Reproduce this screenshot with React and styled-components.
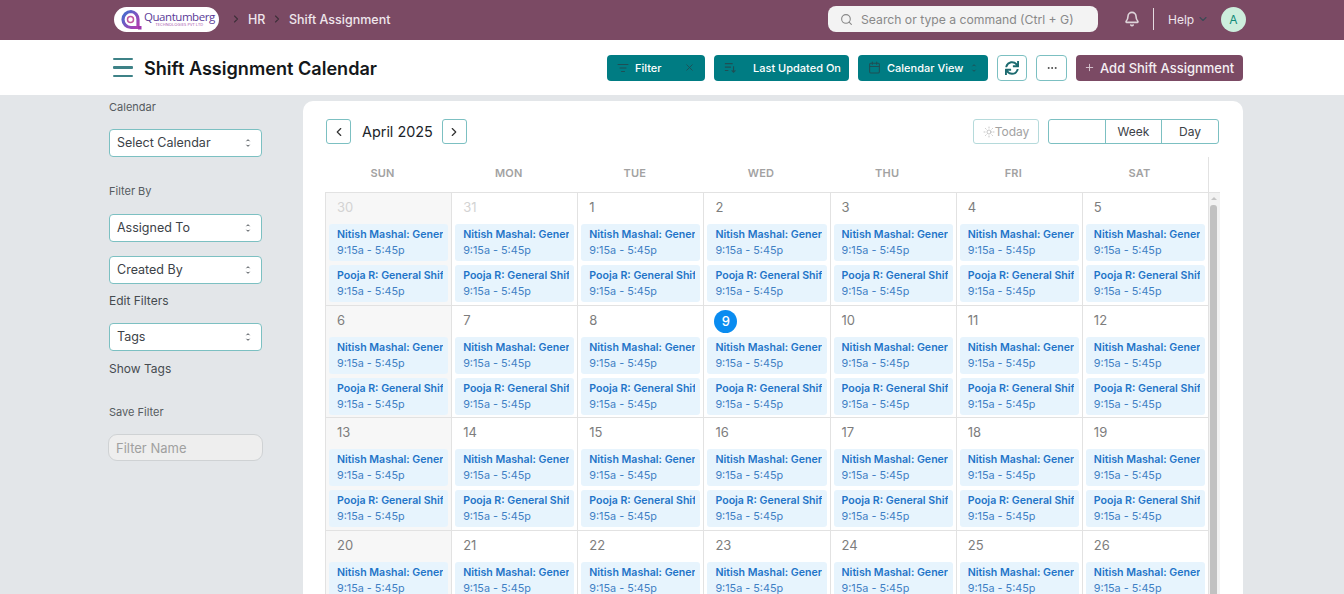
import React from 'react';
import styled, { createGlobalStyle } from 'styled-components';
import {
  Search, Bell, ChevronRight, ChevronLeft, ChevronDown, ListFilter, X, Calendar, Ellipsis, Plus, Sun,
} from 'lucide-react';
import { FaSync } from 'react-icons/fa';

const GlobalStyle = createGlobalStyle`
  html, body {
    margin: 0;
    padding: 0;
    height: 100%;
    overflow: hidden;
    background: #e3e6e9;
    font-family: Inter, "Liberation Sans", sans-serif;
  }
  * { box-sizing: border-box; }
`;

const Page = styled.div`
  height: 594px;
  overflow: hidden;
`;

const Navbar = styled.header`
  height: 40px;
  background: #7b4a64;
  display: flex;
  align-items: center;
  padding: 0 98px 2px 114px;
  color: #efe6ec;
  font-size: 13px;
`;

const LogoPill = styled.div`
  width: 105px;
  height: 25px;
  background: #fff;
  border-radius: 13px;
  display: flex;
  align-items: center;
  padding-left: 6px;
  gap: 1px;
  flex: none;
`;

const LogoText = styled.div`
  display: flex;
  flex-direction: column;
  align-items: center;
  color: #5b3c97;
  font-size: 11.5px;
  letter-spacing: -0.45px;
  line-height: 12px;
  font-family: "Open Sans", sans-serif;
`;

const LogoSub = styled.span`
  font-size: 4px;
  line-height: 4px;
  letter-spacing: 0.1px;
  color: #a04aa8;
`;

const Crumbs = styled.nav`
  display: flex;
  align-items: center;
  margin-left: 11px;
  font-size: 12.5px;
  font-weight: 500;
  flex: 1;
  svg { color: #3e2f39; }
`;

const Crumb = styled.span`
  margin: 0 5.5px 0 6px;
`;

const SearchBox = styled.div`
  width: 270px;
  height: 26px;
  background: #f3f3f3;
  border-radius: 8px;
  display: flex;
  align-items: center;
  gap: 8px;
  padding-left: 12px;
  color: #888;
  font-size: 12.2px;
  margin-right: 26px;
`;

const BellWrap = styled.div`
  display: flex;
  color: #ddd3d9;
  margin-right: 13px;
`;

const Divider = styled.div`
  width: 1px;
  height: 22px;
  background: #e4dbe0;
  margin-right: 14px;
`;

const HelpLabel = styled.span`
  font-size: 12px;
  width: 25px;
  margin-right: 4px;
`;

const HelpChevron = styled.div`
  display: flex;
  color: #3a4a55;
  margin-right: 12px;
`;

const Avatar = styled.div`
  width: 25px;
  height: 25px;
  border-radius: 50%;
  background: #cdeedd;
  color: #128a78;
  font-size: 12px;
  display: flex;
  align-items: center;
  justify-content: center;
  flex: none;
`;

const PageHead = styled.div`
  height: 55px;
  background: #fff;
  display: flex;
  align-items: center;
  padding: 0 101px 0 113px;
`;

const Burger = styled.div`
  width: 20px;
  display: flex;
  flex-direction: column;
  gap: 6px;
  margin-right: 11px;
`;

const BurgerLine = styled.span`
  height: 2.5px;
  background: #3e8287;
  border-radius: 1px;
`;

const Title = styled.h1`
  margin: 0;
  font-size: 18.1px;
  font-weight: 600;
  color: #14171a;
  flex: 1;
`;

const Actions = styled.div`
  display: flex;
  gap: 9px;
`;

const TealButton = styled.button`
  width: ${({ $w }) => $w}px;
  height: 26px;
  border: 0;
  border-radius: 4px;
  background: #007c83;
  color: #fff;
  font: 500 11px Inter, sans-serif;
  display: flex;
  align-items: center;
  padding: 0 10px;
  white-space: nowrap;
  svg { color: #1f4f55; flex: none; }
`;

const BtnText = styled.span`
  margin-left: ${({ $ml }) => $ml}px;
  flex: ${({ $grow }) => ($grow ? 1 : 'none')};
  text-align: left;
`;

const OutlineButton = styled.button`
  width: ${({ $w }) => $w}px;
  height: 26px;
  border: 1px solid #7cc0c2;
  border-radius: 4px;
  background: #fff;
  color: #1d6b70;
  display: flex;
  align-items: center;
  justify-content: center;
  padding: 0;
`;

const AddButton = styled.button`
  width: 167px;
  height: 26px;
  border: 0;
  border-radius: 4px;
  background: #7b4a64;
  color: #f5eff3;
  font: 500 13px Inter, sans-serif;
  display: flex;
  align-items: center;
  gap: 5px;
  padding: 0 0 0 8px;
  white-space: nowrap;
  svg { color: #d9c8d2; }
`;

const Content = styled.main`
  display: flex;
  padding: 5px 0 0 108px;
  gap: 40px;
`;

const Sidebar = styled.aside`
  width: 155px;
  display: flex;
  flex-direction: column;
  flex: none;
`;

const FieldLabel = styled.div`
  font-size: 11px;
  line-height: 14px;
  color: #555b60;
  margin-top: ${({ $mt }) => $mt || 0}px;
  margin-left: 1px;
`;

const LinkLabel = styled.div`
  font-size: 12px;
  line-height: 14px;
  color: #454b50;
  margin-top: ${({ $mt }) => $mt || 0}px;
  margin-left: 1px;
`;

const SelectBox = styled.div`
  width: 153px;
  height: 28px;
  margin: ${({ $mt }) => $mt || 0}px 0 0 1px;
  background: #fff;
  border: 1px solid #7cc0c2;
  border-radius: 4px;
  display: flex;
  align-items: center;
  justify-content: space-between;
  padding: 0 9px 1px 7px;
  font-size: 12.5px;
  color: #3c4248;
`;

const FilterInput = styled.div`
  width: 155px;
  height: 27px;
  margin-top: 15px;
  background: #eee;
  border: 1px solid #cfd2d4;
  border-radius: 9px;
  display: flex;
  align-items: center;
  padding-left: 7px;
  font-size: 13px;
  color: #a0a0a0;
`;

const Card = styled.section`
  width: 940px;
  height: 600px;
  margin-top: 1px;
  background: #fff;
  border-radius: 10px 10px 0 0;
  padding: 18px 23px 0 22px;
  flex: none;
`;

const Toolbar = styled.div`
  height: 25px;
  display: flex;
  align-items: center;
  margin: 0 1px 0 1px;
`;

const NavSquare = styled.button`
  width: 25px;
  height: 25px;
  border: 1px solid #7cc0c2;
  border-radius: 3px;
  background: #fff;
  color: #333;
  display: flex;
  align-items: center;
  justify-content: center;
  padding: 0;
`;

const MonthLabel = styled.div`
  font-size: 14.4px;
  color: #20242a;
  margin: 0 9px 0 11px;
`;

const TodayButton = styled.button`
  width: 66px;
  height: 25px;
  margin-left: auto;
  margin-right: 9px;
  border: 1px solid #b5dadb;
  border-radius: 3px;
  background: #fff;
  color: #a2a2a2;
  font: 400 12px Inter, sans-serif;
  display: flex;
  align-items: center;
  justify-content: center;
  padding: 0;
`;

const ViewGroup = styled.div`
  width: 171px;
  height: 25px;
  border: 1px solid #7cc0c2;
  border-radius: 3px;
  display: grid;
  grid-template-columns: 56px 56px 1fr;
`;

const ViewOption = styled.div`
  font-size: 12px;
  color: #3c4248;
  display: flex;
  align-items: center;
  justify-content: center;
  border-left: ${({ $first }) => ($first ? '0' : '1px solid #7cc0c2')};
`;

const DayHeader = styled.div`
  width: 884px;
  height: 35px;
  margin-top: 13px;
  border-right: 1px solid #e2e2e2;
  display: grid;
  grid-template-columns: repeat(7, 1fr);
`;

const DayName = styled.div`
  font-size: 11px;
  font-weight: 600;
  color: #a2a2a2;
  letter-spacing: 0.2px;
  display: flex;
  align-items: center;
  justify-content: center;
  padding: 0 11px 3px 0;
`;

const CalendarBody = styled.div`
  width: 895px;
  height: 470px;
  display: flex;
  border-top: 1px solid #e2e2e2;
`;

const Scroller = styled.div`
  width: 884px;
  flex: none;
  overflow: hidden;
  border-left: 1px solid #e2e2e2;
`;

const ScrollRail = styled.div`
  width: 11px;
  flex: none;
  background: #f2f2f2;
  display: flex;
  flex-direction: column;
  align-items: flex-start;
  padding: 4px 0 0 1px;
`;

const RailArrow = styled.div`
  width: 0;
  height: 0;
  margin: 0 0 5px 1px;
  border-left: 3px solid transparent;
  border-right: 3px solid transparent;
  border-bottom: 3px solid #c4c4c4;
`;

const RailThumb = styled.div`
  width: 7px;
  flex: 1;
  background: #c1c1c1;
  border-radius: 3px 3px 0 0;
`;

const MonthGrid = styled.div`
  display: grid;
  grid-template-columns: repeat(7, 1fr);
  grid-auto-rows: 112.5px;
`;

const DayCell = styled.div`
  min-width: 0;
  padding: 0 3px;
  border-right: 1px solid #e2e2e2;
  border-bottom: 1px solid #e2e2e2;
  background: ${({ $shaded }) => ($shaded ? '#f7f7f7' : '#fff')};
  display: flex;
  flex-direction: column;
`;

const DateRow = styled.div`
  height: 31px;
  display: flex;
  align-items: center;
  padding: 0 0 3px 8px;
  flex: none;
`;

const DateNum = styled.span`
  font-size: 13px;
  color: ${({ $muted }) => ($muted ? '#d3d3d3' : '#7d7d7d')};
`;

const TodayBadge = styled.span`
  width: 23px;
  height: 23px;
  border-radius: 50%;
  margin: 3px 0 0 -1px;
  background: #0a8cf0;
  color: #fff;
  font-size: 13px;
  font-weight: 500;
  display: flex;
  align-items: center;
  justify-content: center;
`;

const ShiftEvent = styled.div`
  height: 37px;
  margin-bottom: 4px;
  background: #e7f4fd;
  border-radius: 3px;
  padding: 3px 5px 0 8px;
  overflow: hidden;
  white-space: nowrap;
  flex: none;
`;

const EventTitle = styled.div`
  font-size: 10.6px;
  line-height: 15px;
  font-weight: 600;
  color: #1f74c8;
  overflow: hidden;
`;

const EventTime = styled.div`
  font-size: 10.8px;
  line-height: 17px;
  color: #3f80c4;
  overflow: hidden;
`;

const UpDown = () => (
  <svg width="8" height="12" viewBox="0 0 8 12" fill="none" stroke="currentColor" strokeWidth="1">
    <path d="M2.500 4.200 4 2.700 5.500 4.200" />
    <path d="M2.500 7.800 4 9.300 5.500 7.800" />
  </svg>
);

const SortIcon = () => (
  <svg width="13" height="13" viewBox="0 0 15 15" fill="none" stroke="currentColor" strokeWidth="1.300">
    <path d="M1 3h9M1 7h7M1 11h4" />
    <path d="M11 6v7M8.800 10.800 11 13l2.200-2.200" />
  </svg>
);

const LogoMark = () => (
  <svg width="23" height="21" viewBox="0 0 23 21" fill="none">
    <defs>
      <linearGradient id="qm" x1="0" y1="0" x2="1" y2="1">
        <stop offset="0" stopColor="#3f6fd0" />
        <stop offset="1" stopColor="#b23bb0" />
      </linearGradient>
    </defs>
    <path d="M11 2.500a8 8 0 1 0 0 16h7v-8a7.500 8 0 0 0-7-8Z" stroke="url(#qm)" strokeWidth="3.200" />
    <circle cx="10.500" cy="10.500" r="3" stroke="#c0559f" strokeWidth="1.500" />
    <rect x="18" y="17" width="3.500" height="3.500" fill="#a036ae" />
  </svg>
);

const dayNames = ['SUN', 'MON', 'TUE', 'WED', 'THU', 'FRI', 'SAT'];

const days = [
  { n: 30, muted: true },
  { n: 31, muted: true },
  ...Array.from({ length: 30 }, (_, i) => ({ n: i + 1 })),
  { n: 1, muted: true },
  { n: 2, muted: true },
  { n: 3, muted: true },
];

const App = () => (
  <Page>
    <GlobalStyle />
    <Navbar>
      <LogoPill>
        <LogoMark />
        <LogoText>
          Quantumberg
          <LogoSub>TECHNOLOGIES PVT LTD</LogoSub>
        </LogoText>
      </LogoPill>
      <Crumbs>
        <ChevronRight size={12} strokeWidth={2.2} />
        <Crumb>HR</Crumb>
        <ChevronRight size={12} strokeWidth={2.2} />
        <Crumb>Shift Assignment</Crumb>
      </Crumbs>
      <SearchBox>
        <Search size={13} />
        Search or type a command (Ctrl + G)
      </SearchBox>
      <BellWrap><Bell size={16} strokeWidth={2.4} /></BellWrap>
      <Divider />
      <HelpLabel>Help</HelpLabel>
      <HelpChevron><ChevronDown size={12} strokeWidth={2.2} /></HelpChevron>
      <Avatar>A</Avatar>
    </Navbar>

    <PageHead>
      <Burger>
        <BurgerLine />
        <BurgerLine />
        <BurgerLine />
      </Burger>
      <Title>Shift Assignment Calendar</Title>
      <Actions>
        <TealButton $w={98}>
          <ListFilter size={12} />
          <BtnText $ml={6} $grow>Filter</BtnText>
          <X size={11} />
        </TealButton>
        <TealButton $w={135}>
          <SortIcon />
          <BtnText $ml={16}>Last Updated On</BtnText>
        </TealButton>
        <TealButton $w={130}>
          <Calendar size={13} />
          <BtnText $ml={6} $grow>Calendar View</BtnText>
          <UpDown />
        </TealButton>
        <OutlineButton $w={30}><FaSync size={14} /></OutlineButton>
        <OutlineButton $w={31}><Ellipsis size={12} color="#444" /></OutlineButton>
        <AddButton>
          <Plus size={11} />
          Add Shift Assignment
        </AddButton>
      </Actions>
    </PageHead>

    <Content>
      <Sidebar>
        <FieldLabel>Calendar</FieldLabel>
        <SelectBox $mt={15}>Select Calendar<UpDown /></SelectBox>
        <FieldLabel $mt={27}>Filter By</FieldLabel>
        <SelectBox $mt={16}>Assigned To<UpDown /></SelectBox>
        <SelectBox $mt={14}>Created By<UpDown /></SelectBox>
        <LinkLabel $mt={10}>Edit Filters</LinkLabel>
        <SelectBox $mt={15}>Tags<UpDown /></SelectBox>
        <LinkLabel $mt={11}>Show Tags</LinkLabel>
        <FieldLabel $mt={29}>Save Filter</FieldLabel>
        <FilterInput>Filter Name</FilterInput>
      </Sidebar>

      <Card>
        <Toolbar>
          <NavSquare><ChevronLeft size={14} /></NavSquare>
          <MonthLabel>April 2025</MonthLabel>
          <NavSquare><ChevronRight size={14} /></NavSquare>
          <TodayButton><Sun size={12} strokeWidth={1.2} />Today</TodayButton>
          <ViewGroup>
            <ViewOption $first />
            <ViewOption>Week</ViewOption>
            <ViewOption>Day</ViewOption>
          </ViewGroup>
        </Toolbar>

        <DayHeader>
          {dayNames.map((d) => <DayName key={d}>{d}</DayName>)}
        </DayHeader>

        <CalendarBody>
          <Scroller>
            <MonthGrid>
              {days.map((d, i) => (
                <DayCell key={i} $shaded={i % 7 === 0 && i < 28}>
                  <DateRow>
                    {d.n === 9 && !d.muted
                      ? <TodayBadge>9</TodayBadge>
                      : <DateNum $muted={d.muted}>{d.n}</DateNum>}
                  </DateRow>
                  <ShiftEvent>
                    <EventTitle>Nitish Mashal: General Shift</EventTitle>
                    <EventTime>9:15a - 5:45p</EventTime>
                  </ShiftEvent>
                  <ShiftEvent>
                    <EventTitle>Pooja R: General Shift</EventTitle>
                    <EventTime>9:15a - 5:45p</EventTime>
                  </ShiftEvent>
                </DayCell>
              ))}
            </MonthGrid>
          </Scroller>
          <ScrollRail>
            <RailArrow />
            <RailThumb />
          </ScrollRail>
        </CalendarBody>
      </Card>
    </Content>
  </Page>
);

export default App;
